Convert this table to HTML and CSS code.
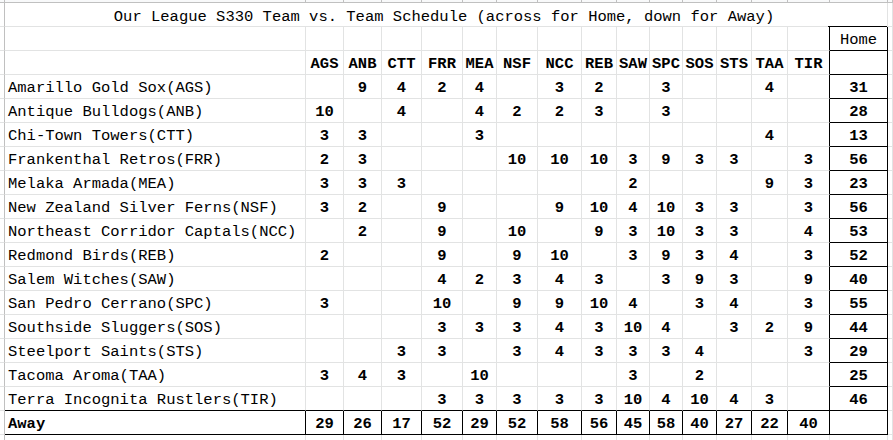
FILE: index.html
```html
<!DOCTYPE html>
<html>
<head>
<meta charset="utf-8">
<link rel="stylesheet" href="styles.css">
</head>
<body>
<div class="sheet">
  <!-- column header strip -->
  <div class="h g"></div><div class="h"></div><div class="h"></div><div class="h"></div><div class="h"></div><div class="h"></div><div class="h"></div><div class="h"></div><div class="h"></div><div class="h"></div><div class="h"></div><div class="h"></div><div class="h"></div><div class="h"></div><div class="h"></div><div class="h"></div><div class="h"></div><div class="h"></div>

  <!-- title -->
  <div class="c g"></div>
  <div class="c title">Our League S330 Team vs. Team Schedule (across for Home, down for Away)</div>
  <div class="c"></div>

  <!-- row 2 -->
  <div class="c g"></div><div class="c n"></div>
  <div class="c"></div><div class="c"></div><div class="c"></div><div class="c"></div><div class="c"></div><div class="c"></div><div class="c"></div><div class="c"></div><div class="c"></div><div class="c"></div><div class="c"></div><div class="c"></div><div class="c"></div><div class="c pre"></div>
  <div class="c home lbl">Home</div><div class="c"></div>

  <!-- header row -->
  <div class="c g"></div><div class="c n"></div>
  <div class="c b">AGS</div><div class="c b">ANB</div><div class="c b">CTT</div><div class="c b">FRR</div><div class="c b">MEA</div><div class="c b">NSF</div><div class="c b">NCC</div><div class="c b">REB</div><div class="c b">SAW</div><div class="c b">SPC</div><div class="c b">SOS</div><div class="c b">STS</div><div class="c b">TAA</div><div class="c b pre">TIR</div>
  <div class="c home"></div><div class="c"></div>

  <!-- AGS -->
  <div class="c g"></div><div class="c n">Amarillo Gold Sox(AGS)</div>
  <div class="c b"></div><div class="c b">9</div><div class="c b">4</div><div class="c b">2</div><div class="c b">4</div><div class="c b"></div><div class="c b">3</div><div class="c b">2</div><div class="c b"></div><div class="c b">3</div><div class="c b"></div><div class="c b"></div><div class="c b">4</div><div class="c b pre"></div>
  <div class="c home b">31</div><div class="c"></div>

  <!-- ANB -->
  <div class="c g"></div><div class="c n">Antique Bulldogs(ANB)</div>
  <div class="c b">10</div><div class="c b"></div><div class="c b">4</div><div class="c b"></div><div class="c b">4</div><div class="c b">2</div><div class="c b">2</div><div class="c b">3</div><div class="c b"></div><div class="c b">3</div><div class="c b"></div><div class="c b"></div><div class="c b"></div><div class="c b pre"></div>
  <div class="c home b">28</div><div class="c"></div>

  <!-- CTT -->
  <div class="c g"></div><div class="c n">Chi-Town Towers(CTT)</div>
  <div class="c b">3</div><div class="c b">3</div><div class="c b"></div><div class="c b"></div><div class="c b">3</div><div class="c b"></div><div class="c b"></div><div class="c b"></div><div class="c b"></div><div class="c b"></div><div class="c b"></div><div class="c b"></div><div class="c b">4</div><div class="c b pre"></div>
  <div class="c home b">13</div><div class="c"></div>

  <!-- FRR -->
  <div class="c g"></div><div class="c n">Frankenthal Retros(FRR)</div>
  <div class="c b">2</div><div class="c b">3</div><div class="c b"></div><div class="c b"></div><div class="c b"></div><div class="c b">10</div><div class="c b">10</div><div class="c b">10</div><div class="c b">3</div><div class="c b">9</div><div class="c b">3</div><div class="c b">3</div><div class="c b"></div><div class="c b pre">3</div>
  <div class="c home b">56</div><div class="c"></div>

  <!-- MEA -->
  <div class="c g"></div><div class="c n">Melaka Armada(MEA)</div>
  <div class="c b">3</div><div class="c b">3</div><div class="c b">3</div><div class="c b"></div><div class="c b"></div><div class="c b"></div><div class="c b"></div><div class="c b"></div><div class="c b">2</div><div class="c b"></div><div class="c b"></div><div class="c b"></div><div class="c b">9</div><div class="c b pre">3</div>
  <div class="c home b">23</div><div class="c"></div>

  <!-- NSF -->
  <div class="c g"></div><div class="c n">New Zealand Silver Ferns(NSF)</div>
  <div class="c b">3</div><div class="c b">2</div><div class="c b"></div><div class="c b">9</div><div class="c b"></div><div class="c b"></div><div class="c b">9</div><div class="c b">10</div><div class="c b">4</div><div class="c b">10</div><div class="c b">3</div><div class="c b">3</div><div class="c b"></div><div class="c b pre">3</div>
  <div class="c home b">56</div><div class="c"></div>

  <!-- NCC -->
  <div class="c g"></div><div class="c n">Northeast Corridor Captals(NCC)</div>
  <div class="c b"></div><div class="c b">2</div><div class="c b"></div><div class="c b">9</div><div class="c b"></div><div class="c b">10</div><div class="c b"></div><div class="c b">9</div><div class="c b">3</div><div class="c b">10</div><div class="c b">3</div><div class="c b">3</div><div class="c b"></div><div class="c b pre">4</div>
  <div class="c home b">53</div><div class="c"></div>

  <!-- REB -->
  <div class="c g"></div><div class="c n">Redmond Birds(REB)</div>
  <div class="c b">2</div><div class="c b"></div><div class="c b"></div><div class="c b">9</div><div class="c b"></div><div class="c b">9</div><div class="c b">10</div><div class="c b"></div><div class="c b">3</div><div class="c b">9</div><div class="c b">3</div><div class="c b">4</div><div class="c b"></div><div class="c b pre">3</div>
  <div class="c home b">52</div><div class="c"></div>

  <!-- SAW -->
  <div class="c g"></div><div class="c n">Salem Witches(SAW)</div>
  <div class="c b"></div><div class="c b"></div><div class="c b"></div><div class="c b">4</div><div class="c b">2</div><div class="c b">3</div><div class="c b">4</div><div class="c b">3</div><div class="c b"></div><div class="c b">3</div><div class="c b">9</div><div class="c b">3</div><div class="c b"></div><div class="c b pre">9</div>
  <div class="c home b">40</div><div class="c"></div>

  <!-- SPC -->
  <div class="c g"></div><div class="c n">San Pedro Cerrano(SPC)</div>
  <div class="c b">3</div><div class="c b"></div><div class="c b"></div><div class="c b">10</div><div class="c b"></div><div class="c b">9</div><div class="c b">9</div><div class="c b">10</div><div class="c b">4</div><div class="c b"></div><div class="c b">3</div><div class="c b">4</div><div class="c b"></div><div class="c b pre">3</div>
  <div class="c home b">55</div><div class="c"></div>

  <!-- SOS -->
  <div class="c g"></div><div class="c n">Southside Sluggers(SOS)</div>
  <div class="c b"></div><div class="c b"></div><div class="c b"></div><div class="c b">3</div><div class="c b">3</div><div class="c b">3</div><div class="c b">4</div><div class="c b">3</div><div class="c b">10</div><div class="c b">4</div><div class="c b"></div><div class="c b">3</div><div class="c b">2</div><div class="c b pre">9</div>
  <div class="c home b">44</div><div class="c"></div>

  <!-- STS -->
  <div class="c g"></div><div class="c n">Steelport Saints(STS)</div>
  <div class="c b"></div><div class="c b"></div><div class="c b">3</div><div class="c b">3</div><div class="c b"></div><div class="c b">3</div><div class="c b">4</div><div class="c b">3</div><div class="c b">3</div><div class="c b">3</div><div class="c b">4</div><div class="c b"></div><div class="c b"></div><div class="c b pre">3</div>
  <div class="c home b">29</div><div class="c"></div>

  <!-- TAA -->
  <div class="c g"></div><div class="c n">Tacoma Aroma(TAA)</div>
  <div class="c b">3</div><div class="c b">4</div><div class="c b">3</div><div class="c b"></div><div class="c b">10</div><div class="c b"></div><div class="c b"></div><div class="c b"></div><div class="c b">3</div><div class="c b"></div><div class="c b">2</div><div class="c b"></div><div class="c b"></div><div class="c b pre"></div>
  <div class="c home b">25</div><div class="c"></div>

  <!-- TIR -->
  <div class="c g"></div><div class="c n last">Terra Incognita Rustlers(TIR)</div>
  <div class="c b last"></div><div class="c b last"></div><div class="c b last"></div><div class="c b last">3</div><div class="c b last">3</div><div class="c b last">3</div><div class="c b last">3</div><div class="c b last">3</div><div class="c b last">10</div><div class="c b last">4</div><div class="c b last">10</div><div class="c b last">4</div><div class="c b last">3</div><div class="c b last pre"></div>
  <div class="c home b">46</div><div class="c"></div>

  <!-- Away -->
  <div class="c g"></div><div class="c n b away">Away</div>
  <div class="c b away">29</div><div class="c b away">26</div><div class="c b away">17</div><div class="c b away">52</div><div class="c b away">29</div><div class="c b away">52</div><div class="c b away">58</div><div class="c b away">56</div><div class="c b away">45</div><div class="c b away">58</div><div class="c b away">40</div><div class="c b away">27</div><div class="c b away">22</div><div class="c b away">40</div>
  <div class="c home away"></div><div class="c"></div>

  <!-- empty row -->
  <div class="c g"></div><div class="c n"></div>
  <div class="c"></div><div class="c"></div><div class="c"></div><div class="c"></div><div class="c"></div><div class="c"></div><div class="c"></div><div class="c"></div><div class="c"></div><div class="c"></div><div class="c"></div><div class="c"></div><div class="c"></div><div class="c"></div>
  <div class="c"></div><div class="c"></div>
</div>
</body>
</html>
```

FILE: styles.css
```css
html, body {
  margin: 0;
  padding: 0;
  background: #ffffff;
  overflow: hidden;
}

.sheet {
  display: grid;
  grid-template-columns: 5px 301px 38px 38px 40px 41px 34px 41px 44px 35px 33px 33px 34px 35px 36px 42px 58px 5px;
  grid-template-rows: 3px;
  grid-auto-rows: 24px;
  font-family: "Courier New", "Nimbus Mono PS", "Nimbus Mono L", "FreeMono", "Liberation Mono", monospace;
  font-size: 15.5px;
  color: #000;
}

.h {
  box-sizing: border-box;
  background: #f8f9fa;
  border-right: 1px solid #c0c0c0;
  border-bottom: 1px solid #c0c0c0;
}

.c {
  box-sizing: border-box;
  border-right: 1px solid #e2e3e3;
  border-bottom: 1px solid #e2e3e3;
  display: flex;
  align-items: flex-end;
  justify-content: center;
  padding-bottom: 1px;
  line-height: 18px;
  white-space: nowrap;
  overflow: hidden;
}

.g {
  border-right-color: #c0c0c0;
}

.title {
  grid-column: 2 / 18;
  border-bottom: none;
  padding-right: 4px;
  background:
    linear-gradient(#e2e3e3, #e2e3e3) left bottom / calc(100% - 59px) 1px no-repeat,
    linear-gradient(#000, #000) right bottom / 59px 1px no-repeat;
}

.n {
  justify-content: flex-start;
  padding-left: 3px;
}

.b {
  font-weight: bold;
}

.pre {
  border-right-color: #000;
}

.home {
  border-right-color: #000;
  border-bottom-color: #000;
}

.last {
  border-bottom-color: #000;
}

.away {
  border-right-color: #000;
  border-bottom-color: #000;
}
```
